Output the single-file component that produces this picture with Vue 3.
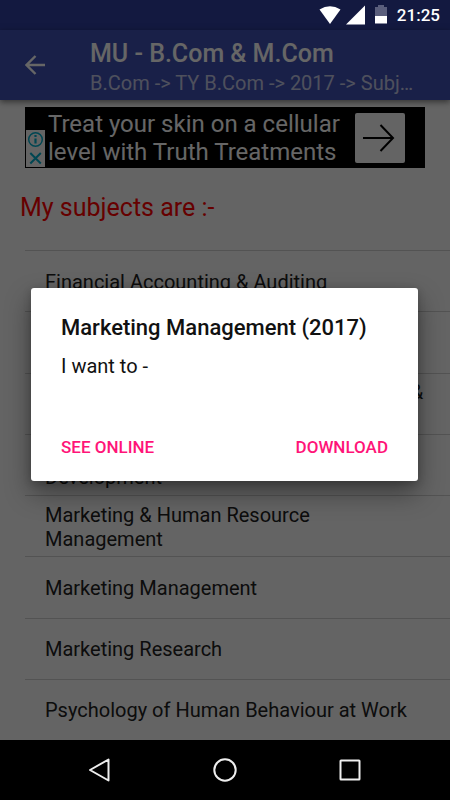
<script setup>
import { ref } from 'vue'

const subjects = [
  'Financial Accounting & Auditing',
  'Human Resource Management',
  'Investment Analysis, Planning, Reporting & Portfolio Management',
  'Management & Organisation Behaviour Development',
  'Marketing & Human Resource Management',
  'Marketing Management',
  'Marketing Research',
  'Psychology of Human Behaviour at Work'
]
const open = ref(true)
</script>

<template>
  <div class="screen">
    <div class="status">
      <svg class="signals" viewBox="0 0 72 20" aria-hidden="true">
        <path d="M.5 3.600Q11 -3 21.500 3.600L11 18Z" transform="translate(0 1)" fill="#fff" />
        <path d="M27 19.500L46 .5V19.500Z" fill="#fff" />
        <path d="M59 0h6v2h3v9H56V2h3Z" fill="#5a5e7c" />
        <path d="M56 11h12v7.500H56Z" fill="#fff" />
      </svg>
      <time>21:25</time>
    </div>

    <div class="stage">
      <header class="appbar">
        <button class="back" aria-label="Back">
          <svg viewBox="0 0 20 20"><path d="M20 10H1.500M10.500 1L1.500 10l9 9" fill="none" stroke="currentColor" stroke-width="2.400" /></svg>
        </button>
        <div class="titles">
          <h1>MU - B.Com &amp; M.Com</h1>
          <p>B.Com -&gt; TY B.Com -&gt; 2017 -&gt; Subjects</p>
        </div>
      </header>

      <a class="ad" href="#">
        <span class="badge">
          <svg viewBox="0 0 19 37">
            <g fill="none" stroke="#00aecd">
              <circle cx="9.500" cy="9.500" r="6.800" stroke-width="1.500" />
              <path d="M9.500 8.500v5M9.500 5v2" stroke-width="2.200" />
              <path d="M4.300 23l10.500 10.500M14.800 23L4.300 33.500" stroke-width="2" />
            </g>
          </svg>
        </span>
        <span class="copy">Treat your skin on a cellular<br />level with Truth Treatments</span>
        <span class="go">
          <svg viewBox="0 0 50 50"><path d="M8 25h30M25.500 12L38 25L25.500 38" fill="none" stroke="#000" stroke-width="2" /></svg>
        </span>
      </a>

      <h2>My subjects are :-</h2>

      <ul class="list">
        <li v-for="s in subjects" :key="s"><a href="#" @click.prevent="open = true">{{ s }}</a></li>
      </ul>

      <div v-if="open" class="scrim">
        <section class="dialog" role="dialog" aria-labelledby="dlg-title">
          <h3 id="dlg-title">Marketing Management (2017)</h3>
          <p>I want to -</p>
          <div class="actions">
            <button @click="open = false">SEE ONLINE</button>
            <button @click="open = false">DOWNLOAD</button>
          </div>
        </section>
      </div>
    </div>

    <nav class="navbar">
      <button aria-label="Back"><svg viewBox="0 0 24 24"><path d="M20.500 1.500v21L2 12Z" /></svg></button>
      <button aria-label="Home"><svg viewBox="0 0 24 24"><circle cx="12" cy="12" r="10.700" /></svg></button>
      <button aria-label="Recents"><svg viewBox="0 0 24 24"><rect x="2.500" y="2.500" width="19" height="19" rx=".5" /></svg></button>
    </nav>
  </div>
</template>

<style>
body {
  margin: 0;
  background: #000;
}
</style>

<style scoped>
.screen {
  min-height: 100vh;
  display: flex;
  flex-direction: column;
  font-family: Roboto, "Liberation Sans", sans-serif;
}
h1, h2, h3, p, ul {
  margin: 0;
  padding: 0;
  font-weight: 400;
}
button {
  border: 0;
  padding: 0;
  background: none;
  font-family: inherit;
}
svg {
  display: block;
}
.status {
  height: 30px;
  display: flex;
  align-items: center;
  justify-content: flex-end;
  gap: 6px;
  padding-right: 10px;
  background: #131940;
  color: #fff;
  font-size: 17px;
  font-weight: 500;
}
.signals {
  width: 72px;
  height: 20px;
}
.stage {
  position: relative;
  flex: 1;
  display: flex;
  flex-direction: column;
  background: #fafafa;
}
.appbar {
  height: 70px;
  display: flex;
  align-items: center;
  padding: 0 36px 0 25px;
  gap: 45px;
  background: #3f51b5;
  color: #fff;
  box-shadow: 0 2px 6px rgba(0, 0, 0, 0.5);
}
.back {
  color: #fff;
}
.back svg {
  width: 20px;
  height: 20px;
}
.titles {
  flex: 1;
  min-width: 0;
  padding-top: 6px;
}
.titles h1 {
  font-size: 25px;
  line-height: 30px;
  font-weight: 500;
}
.titles p {
  font-size: 20px;
  line-height: 28px;
  color: rgba(255, 255, 255, 0.7);
  white-space: nowrap;
  overflow: hidden;
  text-overflow: ellipsis;
}
.ad {
  display: flex;
  align-items: center;
  margin: 7px 25px 0;
  height: 61px;
  background: #000;
  color: #fff;
  text-decoration: none;
}
.badge {
  align-self: flex-end;
  width: 19px;
  margin: 0 3px 1px 1px;
  background: #fafafa;
}
.copy {
  flex: 1;
  font-size: 24px;
  line-height: 28px;
  white-space: nowrap;
}
.go {
  width: 50px;
  margin-right: 20px;
  border-radius: 2px;
  background: #fafafa;
}
h2 {
  padding: 25px 20px 27px;
  font-size: 25px;
  line-height: 30px;
  color: #f00;
}
.list {
  flex: 1;
  display: grid;
  grid-auto-rows: 1fr;
  margin-left: 25px;
  list-style: none;
}
.list li {
  display: flex;
  align-items: center;
  min-height: 58px;
  padding: 1px 20px 0;
  border-top: 1px solid #d0d0d0;
}
.list a {
  font-size: 20px;
  line-height: 24px;
  color: #212121;
  text-decoration: none;
}
.scrim {
  position: absolute;
  inset: 0;
  display: flex;
  align-items: center;
  padding: 0 32px 2px 31px;
  background: rgba(0, 0, 0, 0.6);
}
.dialog {
  flex: 1;
  padding: 25px 30px 20px;
  border-radius: 3px;
  background: #fff;
  box-shadow: 0 12px 26px rgba(0, 0, 0, 0.4), 0 2px 8px rgba(0, 0, 0, 0.2);
}
.dialog h3 {
  font-size: 22px;
  line-height: 30px;
  font-weight: 500;
  color: #111;
}
.dialog p {
  padding: 11px 0 55px;
  font-size: 20px;
  line-height: 24px;
  color: #111;
}
.actions {
  display: flex;
  justify-content: space-between;
}
.actions button {
  font-size: 17px;
  line-height: 28px;
  font-weight: 500;
  color: #ff1478;
}
.navbar {
  height: 60px;
  display: flex;
  align-items: center;
  justify-content: center;
  gap: 101px;
  background: #000;
}
.navbar svg {
  width: 24px;
  height: 24px;
  fill: none;
  stroke: #eee;
  stroke-width: 2;
  stroke-linejoin: round;
}
</style>
